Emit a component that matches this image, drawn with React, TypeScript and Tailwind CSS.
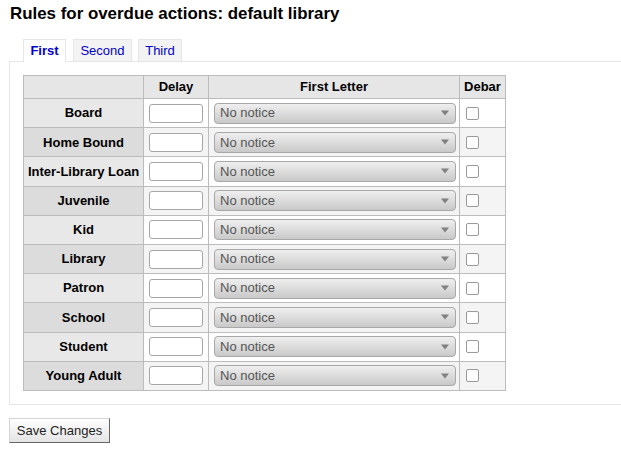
const categories = [
  'Board',
  'Home Bound',
  'Inter-Library Loan',
  'Juvenile',
  'Kid',
  'Library',
  'Patron',
  'School',
  'Student',
  'Young Adult',
];

function NoticeSelect() {
  return (
    <div className="flex h-[21px] w-[242px] items-center justify-between rounded-[4px] border border-[#a8a8a8] bg-gradient-to-b from-[#efefef] to-[#c9c9c9] pl-[5px] pr-[5px] text-[13px] text-[#555]">
      <span>No notice</span>
      <svg width="8" height="6" viewBox="0 0 8 6" className="mr-[1px]">
        <path d="M0 0.5 H8 L4 5.5 Z" fill="#808080" />
      </svg>
    </div>
  );
}

export default function App() {
  return (
    <div className="h-[465px] w-[621px] overflow-hidden bg-white font-['Liberation_Sans',Arial,sans-serif] text-black">
      {/* Title */}
      <h1 className="ml-[10px] mt-[4px] text-[16.9px] font-bold leading-[20px]">
        Rules for overdue actions: default library
      </h1>

      {/* Tabs */}
      <div className="relative z-10 mt-[15px] -mb-px flex items-start pl-[23px] text-[13px] leading-[16px]">
        <div className="flex h-[23px] w-[43px] items-start justify-center border border-b-0 border-[#e6e6e6] bg-white pt-[3px] font-bold text-[#0000cc]">
          First
        </div>
        <div className="ml-[7px] flex h-[22px] w-[59px] items-start justify-center border border-b-0 border-[#e6e6e6] bg-[#f3f3f3] pt-[3px] text-[#0000cc]">
          Second
        </div>
        <div className="ml-[6px] flex h-[22px] w-[44px] items-start justify-center border border-b-0 border-[#e6e6e6] bg-[#f3f3f3] pt-[3px] text-[#0000cc]">
          Third
        </div>
      </div>

      {/* Panel */}
      <div className="ml-[9px] w-[700px] border border-[#e6e6e6] p-[13px]">
        <table className="table-fixed border-collapse border border-[#bcbcbc] text-[13px]">
          <colgroup>
            <col className="w-[120px]" />
            <col className="w-[65px]" />
            <col className="w-[251px]" />
            <col className="w-[46px]" />
          </colgroup>
          <thead>
            <tr className="h-[23px] bg-[#e6e6e6]">
              <th className="border border-[#bcbcbc] p-0"></th>
              <th className="border border-[#bcbcbc] p-0 text-center font-bold">Delay</th>
              <th className="border border-[#bcbcbc] p-0 text-center font-bold">First Letter</th>
              <th className="border border-[#bcbcbc] p-0 text-center font-bold">Debar</th>
            </tr>
          </thead>
          <tbody>
            {categories.map((name, i) => (
              <tr key={name} className={i % 2 === 0 ? 'h-[29.2px] bg-white' : 'h-[29.2px] bg-[#f4f4f4]'}>
                <th
                  className={
                    i % 2 === 0
                      ? 'border border-[#bcbcbc] bg-[#e8e8e8] p-0 text-center font-bold whitespace-nowrap'
                      : 'border border-[#bcbcbc] bg-[#dcdcdc] p-0 text-center font-bold whitespace-nowrap'
                  }
                >
                  {name}
                </th>
                <td className="border border-[#bcbcbc] py-0 pl-[5px] pr-0">
                  <input
                    type="text"
                    className="block h-[19px] w-[54px] rounded-[3px] border border-[#a6a6a6] bg-white"
                  />
                </td>
                <td className="border border-[#bcbcbc] py-0 pl-[5px] pr-0">
                  <NoticeSelect />
                </td>
                <td className="border border-[#bcbcbc] py-0 pl-[6px] pr-0">
                  <input
                    type="checkbox"
                    className="block h-[13px] w-[13px] appearance-none rounded-[2px] border border-[#9a9a9a] bg-white"
                  />
                </td>
              </tr>
            ))}
          </tbody>
        </table>
      </div>

      {/* Save */}
      <button className="ml-[9px] mt-[13px] h-[25px] w-[101px] border border-t-[#d4d4d4] border-l-[#d4d4d4] border-r-[#666] border-b-[#666] bg-gradient-to-b from-[#ffffff] to-[#e4e4e4] text-center text-[13px] text-[#222]">
        Save Changes
      </button>
    </div>
  );
}
